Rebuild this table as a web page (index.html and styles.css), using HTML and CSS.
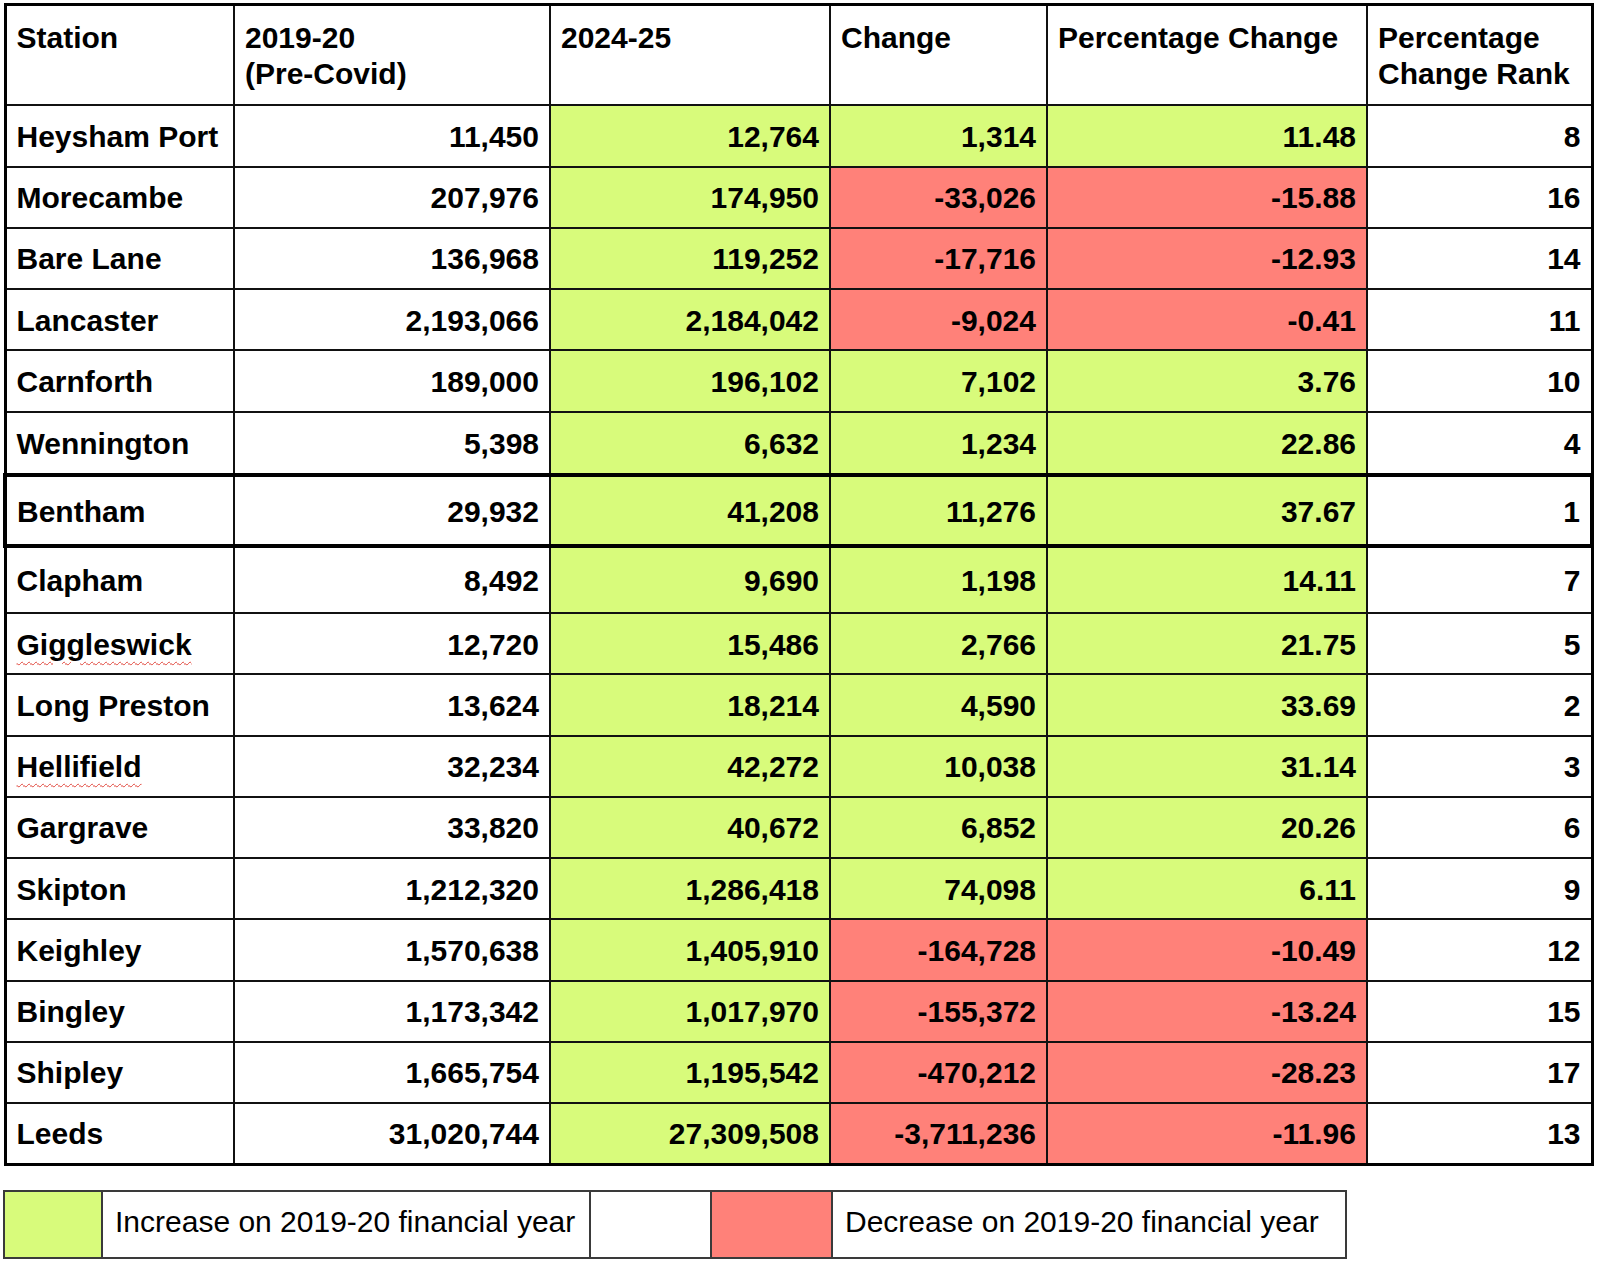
FILE: index.html
```html
<!DOCTYPE html>
<html lang="en">
<head>
<meta charset="utf-8">
<title>Station usage 2019-20 vs 2024-25</title>
<link rel="stylesheet" href="styles.css">
</head>
<body>
<table class="data">
  <colgroup>
    <col class="c-station"><col class="c-pre"><col class="c-now"><col class="c-chg"><col class="c-pct"><col class="c-rank">
  </colgroup>
  <thead>
    <tr class="head">
      <th>Station</th>
      <th>2019-20<br>(Pre-Covid)</th>
      <th>2024-25</th>
      <th>Change</th>
      <th>Percentage Change</th>
      <th>Percentage<br>Change Rank</th>
    </tr>
  </thead>
  <tbody>
    <tr><td class="name">Heysham Port</td><td>11,450</td><td class="up">12,764</td><td class="up">1,314</td><td class="up">11.48</td><td>8</td></tr>
    <tr><td class="name">Morecambe</td><td>207,976</td><td class="up">174,950</td><td class="down">-33,026</td><td class="down">-15.88</td><td>16</td></tr>
    <tr><td class="name">Bare Lane</td><td>136,968</td><td class="up">119,252</td><td class="down">-17,716</td><td class="down">-12.93</td><td>14</td></tr>
    <tr><td class="name">Lancaster</td><td>2,193,066</td><td class="up">2,184,042</td><td class="down">-9,024</td><td class="down">-0.41</td><td>11</td></tr>
    <tr><td class="name">Carnforth</td><td>189,000</td><td class="up">196,102</td><td class="up">7,102</td><td class="up">3.76</td><td>10</td></tr>
    <tr class="before-hl"><td class="name">Wennington</td><td>5,398</td><td class="up">6,632</td><td class="up">1,234</td><td class="up">22.86</td><td>4</td></tr>
    <tr class="hl"><td class="name">Bentham</td><td>29,932</td><td class="up">41,208</td><td class="up">11,276</td><td class="up">37.67</td><td>1</td></tr>
    <tr class="after-hl"><td class="name">Clapham</td><td>8,492</td><td class="up">9,690</td><td class="up">1,198</td><td class="up">14.11</td><td>7</td></tr>
    <tr><td class="name"><span class="typo">Giggleswick</span></td><td>12,720</td><td class="up">15,486</td><td class="up">2,766</td><td class="up">21.75</td><td>5</td></tr>
    <tr><td class="name">Long Preston</td><td>13,624</td><td class="up">18,214</td><td class="up">4,590</td><td class="up">33.69</td><td>2</td></tr>
    <tr><td class="name"><span class="typo">Hellifield</span></td><td>32,234</td><td class="up">42,272</td><td class="up">10,038</td><td class="up">31.14</td><td>3</td></tr>
    <tr><td class="name">Gargrave</td><td>33,820</td><td class="up">40,672</td><td class="up">6,852</td><td class="up">20.26</td><td>6</td></tr>
    <tr><td class="name">Skipton</td><td>1,212,320</td><td class="up">1,286,418</td><td class="up">74,098</td><td class="up">6.11</td><td>9</td></tr>
    <tr><td class="name">Keighley</td><td>1,570,638</td><td class="up">1,405,910</td><td class="down">-164,728</td><td class="down">-10.49</td><td>12</td></tr>
    <tr><td class="name">Bingley</td><td>1,173,342</td><td class="up">1,017,970</td><td class="down">-155,372</td><td class="down">-13.24</td><td>15</td></tr>
    <tr><td class="name">Shipley</td><td>1,665,754</td><td class="up">1,195,542</td><td class="down">-470,212</td><td class="down">-28.23</td><td>17</td></tr>
    <tr><td class="name">Leeds</td><td>31,020,744</td><td class="up">27,309,508</td><td class="down">-3,711,236</td><td class="down">-11.96</td><td>13</td></tr>
  </tbody>
</table>

<table class="legend">
  <colgroup>
    <col class="l-sw1"><col class="l-txt1"><col class="l-gap"><col class="l-sw2"><col class="l-txt2">
  </colgroup>
  <tr>
    <td class="up"></td>
    <td class="ltext">Increase on 2019-20 financial year</td>
    <td></td>
    <td class="down"></td>
    <td class="ltext">Decrease on 2019-20 financial year</td>
  </tr>
</table>
</body>
</html>
```

FILE: styles.css
```css
html, body {
  margin: 0;
  padding: 0;
  background: #ffffff;
}

body {
  font-family: "Liberation Sans", Arial, Helvetica, sans-serif;
  color: #000;
}

.data {
  border-collapse: collapse;
  table-layout: fixed;
  width: 1587px;
  margin: 3px 0 0 3px;
  border: 3px solid #000;
  font-size: 30px;
  font-weight: bold;
}

.c-station { width: 229px; }
.c-pre { width: 316px; }
.c-now { width: 280px; }
.c-chg { width: 217px; }
.c-pct { width: 320px; }
.c-rank { width: 225px; }

.data th,
.data td {
  border: 2px solid #111;
  padding: 0 10px 0 10px;
  background: #fff;
}

.data th {
  text-align: left;
  vertical-align: top;
  font-weight: bold;
  line-height: 36px;
  padding-top: 14px;
  padding-bottom: 11px;
}

.head { height: 100px; }

.data td {
  text-align: right;
  vertical-align: middle;
  line-height: 34px;
  padding-top: 2px;
}

.data td.name {
  text-align: left;
}

.data tbody tr { height: 61.25px; }
.data tbody tr:first-child { height: 62px; }
.data tbody tr.before-hl { height: 63.5px; }
.data tbody tr.hl { height: 71px; }
.data tbody tr.after-hl { height: 67px; }

.data tr.hl td {
  border-top: 4px solid #000;
  border-bottom: 4px solid #000;
}
.data tr.hl td:first-child { border-left: 4px solid #000; }
.data tr.hl td:last-child { border-right: 4px solid #000; }

.data td.up,
.legend td.up { background: #d8fb7b; }
.data td.down,
.legend td.down { background: #ff8179; }

.typo {
  text-decoration: underline wavy #e0453b;
  text-decoration-thickness: 1px;
  text-underline-offset: 6px;
}

.legend {
  border-collapse: collapse;
  table-layout: fixed;
  width: 1342px;
  margin: 24px 0 0 3px;
  font-size: 30px;
  font-weight: normal;
}

.l-sw1 { width: 98px; }
.l-txt1 { width: 488px; }
.l-gap { width: 121px; }
.l-sw2 { width: 121px; }
.l-txt2 { width: 514px; }

.legend td {
  border: 2px solid #3a3a3a;
  height: 61px;
  padding: 0 0 4px 12px;
  background: #fff;
  vertical-align: middle;
  line-height: 34px;
  white-space: nowrap;
}

.legend td.ltext { padding-left: 12px; }
```
